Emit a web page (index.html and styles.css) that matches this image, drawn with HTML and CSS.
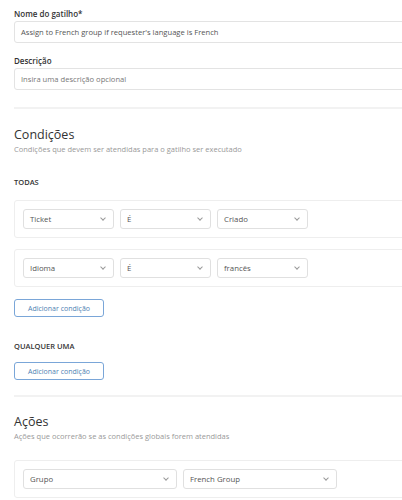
FILE: index.html
```html
<!DOCTYPE html>
<html>
<head>
<meta charset="utf-8">
<link rel="stylesheet" href="styles.css">
</head>
<body>
<div class="page">
  <div class="field">
    <label class="label">Nome do gatilho*</label>
    <div class="input">Assign to French group if requester's language is French</div>
  </div>
  <div class="field field2">
    <label class="label">Descrição</label>
    <div class="input placeholder">Insira uma descrição opcional</div>
  </div>
  <hr class="sep sep1">
  <h2 class="heading">Condições</h2>
  <p class="sub">Condições que devem ser atendidas para o gatilho ser executado</p>
  <div class="group-title todas">TODAS</div>
  <div class="card">
    <div class="select w91"><span>Ticket</span><i class="chev"></i></div>
    <div class="select w91"><span>É</span><i class="chev"></i></div>
    <div class="select w91"><span>Criado</span><i class="chev"></i></div>
  </div>
  <div class="card card2">
    <div class="select w91"><span>Idioma</span><i class="chev"></i></div>
    <div class="select w91"><span>É</span><i class="chev"></i></div>
    <div class="select w91"><span>francês</span><i class="chev"></i></div>
  </div>
  <button class="btn btn1">Adicionar condição</button>
  <div class="group-title qualquer">QUALQUER UMA</div>
  <button class="btn btn2">Adicionar condição</button>
  <hr class="sep sep2">
  <h2 class="heading heading2">Ações</h2>
  <p class="sub">Ações que ocorrerão se as condições globais forem atendidas</p>
  <div class="card card3">
    <div class="select w154"><span>Grupo</span><i class="chev"></i></div>
    <div class="select w154"><span>French Group</span><i class="chev"></i></div>
  </div>
</div>
</body>
</html>
```
FILE: styles.css
```css
html, body {
  margin: 0;
  padding: 0;
  overflow: hidden;
  background: #fff;
}
body {
  font-family: "Open Sans", "Noto Sans", sans-serif;
  color: #333;
}
.page {
  width: 420px;
  padding: 8px 0 0 14px;
}
.field { display: flex; flex-direction: column; }
.field2 { margin-top: 12px; }
.label {
  font-size: 8px;
  font-weight: 600;
  line-height: 12px;
  margin-bottom: 1px;
  color: #333;
}
.input {
  height: 22px;
  box-sizing: border-box;
  border: 1px solid #e3e3e3;
  border-radius: 3px;
  padding: 0 6px;
  font-size: 7.6px;
  line-height: 20px;
  color: #555;
}
.placeholder { color: #777; }
.sep {
  margin: 17px 0 0;
  border: 0;
  border-top: 2px solid #f2f2f2;
  height: 0;
}
.heading {
  margin: 17px 0 0;
  font-size: 12.5px;
  line-height: 18px;
  font-weight: 400;
  color: #333;
}
.sub {
  margin: 0;
  font-size: 7.5px;
  line-height: 11px;
  color: #999;
}
.group-title {
  font-size: 7.5px;
  font-weight: 600;
  line-height: 11px;
  color: #333;
}
.todas { margin-top: 22px; }
.card {
  margin-top: 12px;
  border: 1px solid #eeeeee;
  border-radius: 3px;
  padding: 8px;
  display: flex;
  gap: 6px;
}
.card2 { margin-top: 11px; }
.card3 { margin-top: 18px; }
.select {
  height: 20px;
  box-sizing: border-box;
  border: 1px solid #e0e0e0;
  border-radius: 3px;
  display: flex;
  align-items: center;
  justify-content: space-between;
  padding: 0 8px 0 6px;
  font-size: 7.8px;
  color: #555;
}
.w91 { width: 91px; }
.w154 { width: 154px; }
.chev {
  width: 3px;
  height: 3px;
  border-right: 1px solid #999;
  border-bottom: 1px solid #999;
  transform: rotate(45deg);
  margin-top: -2px;
}
.btn {
  display: block;
  margin-top: 12px;
  width: 90px;
  height: 18px;
  box-sizing: border-box;
  border: 1px solid #7aa6d8;
  border-radius: 3px;
  background: #fff;
  font-family: inherit;
  font-size: 7px;
  color: #4f7fb3;
  padding: 0;
}
.qualquer { margin-top: 24px; }
.btn2 { margin-top: 10px; }
.sep2 { margin-top: 15px; }
.heading2 { margin-top: 16px; }
```
